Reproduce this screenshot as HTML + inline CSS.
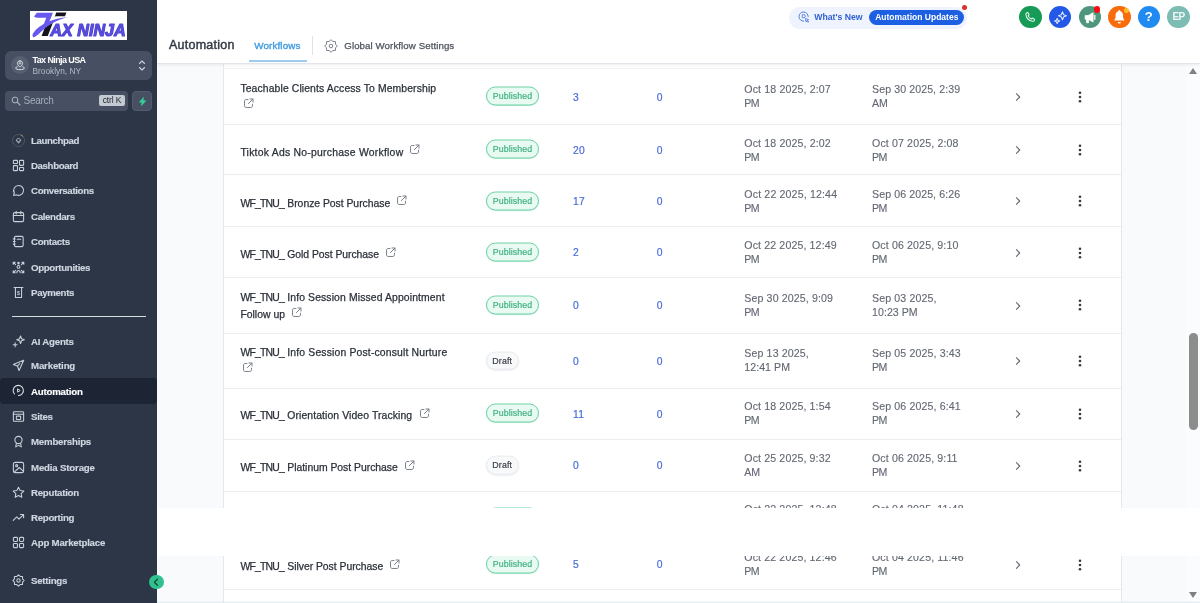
<!DOCTYPE html>
<html lang="en"><head><meta charset="utf-8"><title>Automation - Workflows</title>
<style>
*{box-sizing:border-box;margin:0;padding:0}
html,body{width:1200px;height:603px;overflow:hidden;background:#f9fafc;font-family:"Liberation Sans",Arial,sans-serif;-webkit-font-smoothing:antialiased}
#app{will-change:transform;position:relative;width:1200px;height:603px;overflow:hidden}
/* sidebar */
#sb{position:absolute;left:0;top:0;width:157px;height:603px;background:#2c3647}
#logo{position:absolute;left:30px;top:11.200px;width:97px;height:28.500px;background:#fff;overflow:hidden}
#acct{position:absolute;left:5px;top:51px;width:147px;height:29px;border-radius:6px;background:#465062}
#acct .av{position:absolute;left:6px;top:5px;width:18px;height:18px;border-radius:50%;background:#566072}
#acct .t1{position:absolute;left:27.500px;top:4px;font-size:9px;font-weight:bold;color:#fff;white-space:pre;line-height:11px}
#acct .t2{position:absolute;left:27.500px;top:15px;font-size:8.300px;color:#b4bcc8;white-space:nowrap;line-height:11px}
#srch{position:absolute;left:5px;top:91px;width:123px;height:20px;border-radius:4px;background:#465062}
#srch .ph{position:absolute;left:18.500px;top:4px;font-size:10px;line-height:12px;color:#a3acb9;letter-spacing:-.25px}
#srch .kb{position:absolute;left:94px;top:4px;width:26px;height:11px;border-radius:2px;background:#c5cad2;color:#1c2430;font-size:8.500px;line-height:11px;text-align:center;letter-spacing:-.15px}
#bolt{position:absolute;left:132px;top:91px;width:20px;height:20px;border-radius:4px;background:#465062;border:1px solid #525c6d}
.ni{position:absolute;left:0;width:157px;height:25px;margin-top:-12.500px}
.ni.act{background:#1d2434;border-radius:4px;height:26px;margin-top:-13.200px}
.ni.act .ic{top:6.500px}
.ni.act .tx{top:7.500px}
.ni .ic{position:absolute;left:11.500px;top:6px;width:13px;height:13px}
.ni .ic svg{width:13px;height:13px;display:block}
.ni .tx{position:absolute;left:31px;top:6px;font-size:9.700px;line-height:13px;font-weight:bold;color:#cfd6e0;white-space:pre;-webkit-text-stroke:.15px #cfd6e0}
.ni.act .tx{color:#fff;-webkit-text-stroke:.15px #fff}
#sbdiv{position:absolute;left:12px;top:316px;width:134px;height:1px;background:#d7dce3}
#coll{position:absolute;left:149px;top:574.500px;width:14.500px;height:14.500px;border-radius:50%;background:#2fc08e}
/* top bar */
#tb{position:absolute;left:157px;top:0;width:1043px;height:64px;background:#fff;border-bottom:1px solid #e1e5ea;box-shadow:0 1px 3px rgba(20,30,50,.08)}
#ttl{position:absolute;left:12px;top:37px;font-size:12.500px;line-height:16px;color:#333a45;white-space:pre;-webkit-text-stroke:.45px #333a45}
#tab1{position:absolute;left:97.300px;top:39px;font-size:9.800px;line-height:13px;color:#3f9ae0;white-space:pre;-webkit-text-stroke:.35px #3f9ae0}
#tabul{position:absolute;left:92px;top:60px;width:58px;height:2px;background:#9ccbee}
#tsep{position:absolute;left:154.800px;top:36px;width:1px;height:19px;background:#dfe3e8}
#tab2{position:absolute;left:187.300px;top:39px;font-size:9.700px;line-height:13px;color:#4d535d;white-space:pre;-webkit-text-stroke:.25px #4d535d}
#gear{position:absolute;left:166.750px;top:39px;width:14px;height:14px}
#wn{position:absolute;left:631.500px;top:6.500px;width:178.500px;height:22px;border-radius:11px;background:#eff3fd}
#wn .t{position:absolute;left:25.800px;top:4px;font-size:8.700px;line-height:12px;font-weight:bold;color:#2f5fd3;white-space:pre}
#wn .p{position:absolute;left:80.500px;top:3px;width:94.500px;height:15px;border-radius:8px;background:#1d5fe3}
#wn .p>span{position:absolute;left:6.200px;top:1.300px;font-size:8.500px;line-height:12px;font-weight:bold;color:#fff;white-space:pre}
#wn .dot{position:absolute;left:173.500px;top:-1.400px;width:5.300px;height:5.300px;border-radius:50%;background:#d8302a}
.cb{position:absolute;top:5.700px;width:22.600px;height:22.600px;border-radius:50%}
.cb svg{position:absolute;left:0;top:0;width:22.600px;height:22.600px}
/* content */
#tblbg{position:absolute;left:222.500px;top:64px;width:899px;height:539px;background:#fff;border-left:1px solid #e6e8eb;border-right:1px solid #e6e8eb}
.hl{position:absolute;left:223px;width:898px;height:1px;background:#eaecef}
.cell{position:absolute;transform:translateY(-50%);white-space:nowrap}
.nl{position:absolute;left:240.400px;font-size:10.400px;line-height:15px;height:15px;color:#2b303a;white-space:pre;-webkit-text-stroke:.25px #2b303a}
.ext{position:absolute;width:11px;height:11px}
.pre{display:inline-block;width:46.900px;white-space:pre;overflow:hidden;vertical-align:top;height:15px}
.dt{position:absolute;font-size:10.600px;line-height:14px;height:14px;color:#626873;white-space:pre;-webkit-text-stroke:.12px #626873}
.st{left:486px}
.badge{display:block;height:19px;border-radius:10px;font-size:8.800px;line-height:17.600px;text-align:center;white-space:pre}
.badge.pub{width:53px;border:1px solid #70d3a8;background:#e8faf1;color:#41b283;-webkit-text-stroke:.2px #41b283;box-shadow:0 .5px 1px rgba(50,180,120,.3)}
.badge.dr{width:32.500px;height:18.700px;line-height:16.800px;border:1px solid #e9ebee;background:#f8f9fa;color:#3b3f48;-webkit-text-stroke:.2px #3b3f48;box-shadow:0 1px 1.500px rgba(100,110,120,.12)}
.n1{left:573px;font-size:10.300px;color:#4a6cd8;-webkit-text-stroke:.2px #4a6cd8;letter-spacing:.3px}
.n2{left:656.800px;font-size:10.300px;color:#4a6cd8;-webkit-text-stroke:.2px #4a6cd8;letter-spacing:.3px}
.chv{position:absolute;left:1013.900px}
.kb3{position:absolute;left:1078px;fill:#353a43}
.chev svg{display:block}
.keb{left:1079px;width:3px}
.keb i{display:block;width:2.800px;height:2.800px;border-radius:50%;background:#343942;margin:1.200px 0}
#band{position:absolute;left:157px;top:508px;width:1043px;height:48px;background:#fff}
#sbar{position:absolute;left:1186px;top:64px;width:14px;height:539px;background:#fbfcfd}
#botg{position:absolute;left:157px;top:600.500px;width:1043px;height:2.500px;background:linear-gradient(rgba(225,236,242,0),rgba(222,234,241,1))}
#thumb{position:absolute;left:1189px;top:333px;width:9px;height:97px;border-radius:4.500px;background:#8c8c8c}
.arr{position:absolute;left:1188.800px;width:0;height:0;border-left:4.500px solid transparent;border-right:4.500px solid transparent}
</style></head><body><div id="app">
<div id="tblbg"></div>
<div class="hl" style="top:68px;background:#f1f2f4"></div><div class="hl" style="top:124px"></div><div class="hl" style="top:174px"></div><div class="hl" style="top:226px"></div><div class="hl" style="top:277px"></div><div class="hl" style="top:333px"></div><div class="hl" style="top:388px"></div><div class="hl" style="top:439px"></div><div class="hl" style="top:490.5px"></div><div class="hl" style="top:542px"></div><div class="hl" style="top:589px"></div>
<div class="nl" style="top:81px"><span style="letter-spacing:0.112px">Teachable Clients Access To Membership</span></div><svg class="ext" style="left:242.6px;top:97.8px" viewBox="0 0 10 10"><path d="M8.600 5.600v1.600c0 .8-.6 1.400-1.400 1.400H2.800c-.8 0-1.400-.6-1.400-1.400V2.800c0-.8.600-1.400 1.400-1.400h1.700M6.300 .9h2.800v2.800M9 1L4.900 5.100" fill="none" stroke="#787e88" stroke-width=".9" stroke-linecap="round" stroke-linejoin="round"/></svg>
<div class="cell st" style="top:96.2px"><span class="badge pub"><span style="letter-spacing:0.095px">Published</span></span></div>
<div class="cell n1" style="top:96.5px">3</div>
<div class="cell n2" style="top:96.5px">0</div>
<div class="dt" style="left:744.3px;top:82px"><span style="letter-spacing:0.139px">Oct 18 2025, 2:07</span></div><div class="dt" style="left:744.3px;top:96px"><span style="letter-spacing:-0.645px">PM</span></div><div class="dt" style="left:872px;top:82px"><span style="letter-spacing:0.094px">Sep 30 2025, 2:39</span></div><div class="dt" style="left:872px;top:96px"><span style="letter-spacing:-0.145px">AM</span></div>
<svg class="chv" style="top:91.8px" viewBox="0 0 8 10" width="8" height="10"><path d="M2.400 1.700l3.300 3.300-3.300 3.300" fill="none" stroke="#666b74" stroke-width="1.100" stroke-linecap="round" stroke-linejoin="round"/></svg>
<svg class="kb3" style="top:90.7px" viewBox="0 0 4 12" width="4" height="12"><circle cx="2" cy="1.800" r="1.300"/><circle cx="2" cy="6" r="1.300"/><circle cx="2" cy="10.200" r="1.300"/></svg>
<div class="nl" style="top:145px"><span style="letter-spacing:0.247px">Tiktok Ads No-purchase Workflow</span></div><svg class="ext" style="left:409.4px;top:144.2px" viewBox="0 0 10 10"><path d="M8.600 5.600v1.600c0 .8-.6 1.400-1.400 1.400H2.800c-.8 0-1.400-.6-1.400-1.400V2.800c0-.8.600-1.400 1.400-1.400h1.700M6.300 .9h2.800v2.800M9 1L4.900 5.100" fill="none" stroke="#787e88" stroke-width=".9" stroke-linecap="round" stroke-linejoin="round"/></svg>
<div class="cell st" style="top:149.3px"><span class="badge pub"><span style="letter-spacing:0.095px">Published</span></span></div>
<div class="cell n1" style="top:149.60000000000002px">20</div>
<div class="cell n2" style="top:149.60000000000002px">0</div>
<div class="dt" style="left:744.3px;top:136px"><span style="letter-spacing:0.139px">Oct 18 2025, 2:02</span></div><div class="dt" style="left:744.3px;top:150px"><span style="letter-spacing:-0.645px">PM</span></div><div class="dt" style="left:872px;top:136px"><span style="letter-spacing:0.139px">Oct 07 2025, 2:08</span></div><div class="dt" style="left:872px;top:150px"><span style="letter-spacing:-0.645px">PM</span></div>
<svg class="chv" style="top:144.9px" viewBox="0 0 8 10" width="8" height="10"><path d="M2.400 1.700l3.300 3.300-3.300 3.300" fill="none" stroke="#666b74" stroke-width="1.100" stroke-linecap="round" stroke-linejoin="round"/></svg>
<svg class="kb3" style="top:143.8px" viewBox="0 0 4 12" width="4" height="12"><circle cx="2" cy="1.800" r="1.300"/><circle cx="2" cy="6" r="1.300"/><circle cx="2" cy="10.200" r="1.300"/></svg>
<div class="nl" style="top:196px"><span class="pre"><span style="letter-spacing:-0.783px">WF_TNU_</span> </span><span style="letter-spacing:-0.025px">Bronze Post Purchase</span></div><svg class="ext" style="left:396.3px;top:195.3px" viewBox="0 0 10 10"><path d="M8.600 5.600v1.600c0 .8-.6 1.400-1.400 1.400H2.800c-.8 0-1.400-.6-1.400-1.400V2.800c0-.8.600-1.400 1.400-1.400h1.700M6.300 .9h2.800v2.800M9 1L4.900 5.100" fill="none" stroke="#787e88" stroke-width=".9" stroke-linecap="round" stroke-linejoin="round"/></svg>
<div class="cell st" style="top:200.8px"><span class="badge pub"><span style="letter-spacing:0.095px">Published</span></span></div>
<div class="cell n1" style="top:201.10000000000002px">17</div>
<div class="cell n2" style="top:201.10000000000002px">0</div>
<div class="dt" style="left:744.3px;top:187px"><span style="letter-spacing:0.154px">Oct 22 2025, 12:44</span></div><div class="dt" style="left:744.3px;top:201px"><span style="letter-spacing:-0.645px">PM</span></div><div class="dt" style="left:872px;top:187px"><span style="letter-spacing:0.094px">Sep 06 2025, 6:26</span></div><div class="dt" style="left:872px;top:201px"><span style="letter-spacing:-0.645px">PM</span></div>
<svg class="chv" style="top:196.4px" viewBox="0 0 8 10" width="8" height="10"><path d="M2.400 1.700l3.300 3.300-3.300 3.300" fill="none" stroke="#666b74" stroke-width="1.100" stroke-linecap="round" stroke-linejoin="round"/></svg>
<svg class="kb3" style="top:195.3px" viewBox="0 0 4 12" width="4" height="12"><circle cx="2" cy="1.800" r="1.300"/><circle cx="2" cy="6" r="1.300"/><circle cx="2" cy="10.200" r="1.300"/></svg>
<div class="nl" style="top:247px"><span class="pre"><span style="letter-spacing:-0.783px">WF_TNU_</span> </span><span style="letter-spacing:-0.04px">Gold Post Purchase</span></div><svg class="ext" style="left:385.1px;top:247.0px" viewBox="0 0 10 10"><path d="M8.600 5.600v1.600c0 .8-.6 1.400-1.400 1.400H2.800c-.8 0-1.400-.6-1.400-1.400V2.800c0-.8.600-1.400 1.400-1.400h1.700M6.300 .9h2.800v2.800M9 1L4.900 5.100" fill="none" stroke="#787e88" stroke-width=".9" stroke-linecap="round" stroke-linejoin="round"/></svg>
<div class="cell st" style="top:252.1px"><span class="badge pub"><span style="letter-spacing:0.095px">Published</span></span></div>
<div class="cell n1" style="top:252.4px">2</div>
<div class="cell n2" style="top:252.4px">0</div>
<div class="dt" style="left:744.3px;top:238px"><span style="letter-spacing:.13px">Oct 22 2025, 12:49</span></div><div class="dt" style="left:744.3px;top:252px"><span style="letter-spacing:-0.645px">PM</span></div><div class="dt" style="left:872px;top:238px"><span style="letter-spacing:.13px">Oct 06 2025, 9:10</span></div><div class="dt" style="left:872px;top:252px"><span style="letter-spacing:-0.645px">PM</span></div>
<svg class="chv" style="top:247.7px" viewBox="0 0 8 10" width="8" height="10"><path d="M2.400 1.700l3.300 3.300-3.300 3.300" fill="none" stroke="#666b74" stroke-width="1.100" stroke-linecap="round" stroke-linejoin="round"/></svg>
<svg class="kb3" style="top:246.6px" viewBox="0 0 4 12" width="4" height="12"><circle cx="2" cy="1.800" r="1.300"/><circle cx="2" cy="6" r="1.300"/><circle cx="2" cy="10.200" r="1.300"/></svg>
<div class="nl" style="top:290px"><span class="pre"><span style="letter-spacing:-0.783px">WF_TNU_</span> </span><span style="letter-spacing:0.121px">Info Session Missed Appointment</span></div><div class="nl" style="top:307px"><span style="letter-spacing:0.013px">Follow up</span></div><svg class="ext" style="left:290.6px;top:306.8px" viewBox="0 0 10 10"><path d="M8.600 5.600v1.600c0 .8-.6 1.400-1.400 1.400H2.800c-.8 0-1.400-.6-1.400-1.400V2.800c0-.8.600-1.400 1.400-1.400h1.700M6.300 .9h2.800v2.800M9 1L4.900 5.100" fill="none" stroke="#787e88" stroke-width=".9" stroke-linecap="round" stroke-linejoin="round"/></svg>
<div class="cell st" style="top:304.9px"><span class="badge pub"><span style="letter-spacing:0.095px">Published</span></span></div>
<div class="cell n1" style="top:305.2px">0</div>
<div class="cell n2" style="top:305.2px">0</div>
<div class="dt" style="left:744.3px;top:291px"><span style="letter-spacing:.13px">Sep 30 2025, 9:09</span></div><div class="dt" style="left:744.3px;top:305px"><span style="letter-spacing:-0.645px">PM</span></div><div class="dt" style="left:872px;top:291px"><span style="letter-spacing:.13px">Sep 03 2025,</span></div><div class="dt" style="left:872px;top:305px"><span style="letter-spacing:.05px">10:23 PM</span></div>
<svg class="chv" style="top:300.5px" viewBox="0 0 8 10" width="8" height="10"><path d="M2.400 1.700l3.300 3.300-3.300 3.300" fill="none" stroke="#666b74" stroke-width="1.100" stroke-linecap="round" stroke-linejoin="round"/></svg>
<svg class="kb3" style="top:299.4px" viewBox="0 0 4 12" width="4" height="12"><circle cx="2" cy="1.800" r="1.300"/><circle cx="2" cy="6" r="1.300"/><circle cx="2" cy="10.200" r="1.300"/></svg>
<div class="nl" style="top:345px"><span class="pre"><span style="letter-spacing:-0.783px">WF_TNU_</span> </span><span style="letter-spacing:0.161px">Info Session Post-consult Nurture</span></div><svg class="ext" style="left:242.4px;top:362.0px" viewBox="0 0 10 10"><path d="M8.600 5.600v1.600c0 .8-.6 1.400-1.400 1.400H2.800c-.8 0-1.400-.6-1.400-1.400V2.800c0-.8.600-1.400 1.400-1.400h1.700M6.300 .9h2.800v2.800M9 1L4.900 5.100" fill="none" stroke="#787e88" stroke-width=".9" stroke-linecap="round" stroke-linejoin="round"/></svg>
<div class="cell st" style="top:360.6px"><span class="badge dr"><span style="letter-spacing:0.164px">Draft</span></span></div>
<div class="cell n1" style="top:360.90000000000003px">0</div>
<div class="cell n2" style="top:360.90000000000003px">0</div>
<div class="dt" style="left:744.3px;top:346px"><span style="letter-spacing:.13px">Sep 13 2025,</span></div><div class="dt" style="left:744.3px;top:360px"><span style="letter-spacing:.05px">12:41 PM</span></div><div class="dt" style="left:872px;top:346px"><span style="letter-spacing:.13px">Sep 05 2025, 3:43</span></div><div class="dt" style="left:872px;top:360px"><span style="letter-spacing:-0.645px">PM</span></div>
<svg class="chv" style="top:356.2px" viewBox="0 0 8 10" width="8" height="10"><path d="M2.400 1.700l3.300 3.300-3.300 3.300" fill="none" stroke="#666b74" stroke-width="1.100" stroke-linecap="round" stroke-linejoin="round"/></svg>
<svg class="kb3" style="top:355.1px" viewBox="0 0 4 12" width="4" height="12"><circle cx="2" cy="1.800" r="1.300"/><circle cx="2" cy="6" r="1.300"/><circle cx="2" cy="10.200" r="1.300"/></svg>
<div class="nl" style="top:408px"><span class="pre"><span style="letter-spacing:-0.783px">WF_TNU_</span> </span><span style="letter-spacing:0.101px">Orientation Video Tracking</span></div><svg class="ext" style="left:418.5px;top:407.9px" viewBox="0 0 10 10"><path d="M8.600 5.600v1.600c0 .8-.6 1.400-1.400 1.400H2.800c-.8 0-1.400-.6-1.400-1.400V2.800c0-.8.600-1.400 1.400-1.400h1.700M6.300 .9h2.800v2.800M9 1L4.900 5.100" fill="none" stroke="#787e88" stroke-width=".9" stroke-linecap="round" stroke-linejoin="round"/></svg>
<div class="cell st" style="top:413.4px"><span class="badge pub"><span style="letter-spacing:0.095px">Published</span></span></div>
<div class="cell n1" style="top:413.7px">11</div>
<div class="cell n2" style="top:413.7px">0</div>
<div class="dt" style="left:744.3px;top:399px"><span style="letter-spacing:.13px">Oct 18 2025, 1:54</span></div><div class="dt" style="left:744.3px;top:413px"><span style="letter-spacing:-0.645px">PM</span></div><div class="dt" style="left:872px;top:399px"><span style="letter-spacing:.13px">Sep 06 2025, 6:41</span></div><div class="dt" style="left:872px;top:413px"><span style="letter-spacing:-0.645px">PM</span></div>
<svg class="chv" style="top:409.0px" viewBox="0 0 8 10" width="8" height="10"><path d="M2.400 1.700l3.300 3.300-3.300 3.300" fill="none" stroke="#666b74" stroke-width="1.100" stroke-linecap="round" stroke-linejoin="round"/></svg>
<svg class="kb3" style="top:407.9px" viewBox="0 0 4 12" width="4" height="12"><circle cx="2" cy="1.800" r="1.300"/><circle cx="2" cy="6" r="1.300"/><circle cx="2" cy="10.200" r="1.300"/></svg>
<div class="nl" style="top:460px"><span class="pre"><span style="letter-spacing:-0.783px">WF_TNU_</span> </span><span style="letter-spacing:-0.018px">Platinum Post Purchase</span></div><svg class="ext" style="left:403.7px;top:459.5px" viewBox="0 0 10 10"><path d="M8.600 5.600v1.600c0 .8-.6 1.400-1.400 1.400H2.800c-.8 0-1.400-.6-1.400-1.400V2.800c0-.8.600-1.400 1.400-1.400h1.700M6.300 .9h2.800v2.800M9 1L4.900 5.100" fill="none" stroke="#787e88" stroke-width=".9" stroke-linecap="round" stroke-linejoin="round"/></svg>
<div class="cell st" style="top:465px"><span class="badge dr"><span style="letter-spacing:0.164px">Draft</span></span></div>
<div class="cell n1" style="top:465.3px">0</div>
<div class="cell n2" style="top:465.3px">0</div>
<div class="dt" style="left:744.3px;top:451px"><span style="letter-spacing:.13px">Oct 25 2025, 9:32</span></div><div class="dt" style="left:744.3px;top:465px"><span style="letter-spacing:-0.145px">AM</span></div><div class="dt" style="left:872px;top:451px"><span style="letter-spacing:.13px">Oct 06 2025, 9:11</span></div><div class="dt" style="left:872px;top:465px"><span style="letter-spacing:-0.645px">PM</span></div>
<svg class="chv" style="top:460.6px" viewBox="0 0 8 10" width="8" height="10"><path d="M2.400 1.700l3.300 3.300-3.300 3.300" fill="none" stroke="#666b74" stroke-width="1.100" stroke-linecap="round" stroke-linejoin="round"/></svg>
<svg class="kb3" style="top:459.5px" viewBox="0 0 4 12" width="4" height="12"><circle cx="2" cy="1.800" r="1.300"/><circle cx="2" cy="6" r="1.300"/><circle cx="2" cy="10.200" r="1.300"/></svg>
<div class="nl" style="top:511px"><span class="pre"><span style="letter-spacing:-0.783px">WF_TNU_</span> </span><span style="letter-spacing:0.122px">Referral Post Purchase</span></div><svg class="ext" style="left:403.5px;top:511.0px" viewBox="0 0 10 10"><path d="M8.600 5.600v1.600c0 .8-.6 1.400-1.400 1.400H2.800c-.8 0-1.400-.6-1.400-1.400V2.800c0-.8.600-1.400 1.400-1.400h1.700M6.300 .9h2.800v2.800M9 1L4.900 5.100" fill="none" stroke="#787e88" stroke-width=".9" stroke-linecap="round" stroke-linejoin="round"/></svg>
<div class="cell st" style="top:516.5px"><span class="badge pub"><span style="letter-spacing:0.095px">Published</span></span></div>
<div class="cell n1" style="top:516.8px">1</div>
<div class="cell n2" style="top:516.8px">0</div>
<div class="dt" style="left:744.3px;top:502px"><span style="letter-spacing:.13px">Oct 22 2025, 12:48</span></div><div class="dt" style="left:744.3px;top:516px"><span style="letter-spacing:-0.645px">PM</span></div><div class="dt" style="left:872px;top:502px"><span style="letter-spacing:.13px">Oct 04 2025, 11:48</span></div><div class="dt" style="left:872px;top:516px"><span style="letter-spacing:-0.645px">PM</span></div>
<svg class="chv" style="top:512.1px" viewBox="0 0 8 10" width="8" height="10"><path d="M2.400 1.700l3.300 3.300-3.300 3.300" fill="none" stroke="#666b74" stroke-width="1.100" stroke-linecap="round" stroke-linejoin="round"/></svg>
<svg class="kb3" style="top:511.0px" viewBox="0 0 4 12" width="4" height="12"><circle cx="2" cy="1.800" r="1.300"/><circle cx="2" cy="6" r="1.300"/><circle cx="2" cy="10.200" r="1.300"/></svg>
<div class="nl" style="top:559px"><span class="pre"><span style="letter-spacing:-0.783px">WF_TNU_</span> </span><span style="letter-spacing:-0.028px">Silver Post Purchase</span></div><svg class="ext" style="left:389.3px;top:558.5px" viewBox="0 0 10 10"><path d="M8.600 5.600v1.600c0 .8-.6 1.400-1.400 1.400H2.800c-.8 0-1.400-.6-1.400-1.400V2.800c0-.8.600-1.400 1.400-1.400h1.700M6.300 .9h2.800v2.800M9 1L4.900 5.100" fill="none" stroke="#787e88" stroke-width=".9" stroke-linecap="round" stroke-linejoin="round"/></svg>
<div class="cell st" style="top:564px"><span class="badge pub"><span style="letter-spacing:0.095px">Published</span></span></div>
<div class="cell n1" style="top:564.3px">5</div>
<div class="cell n2" style="top:564.3px">0</div>
<div class="dt" style="left:744.3px;top:550px"><span style="letter-spacing:.13px">Oct 22 2025, 12:46</span></div><div class="dt" style="left:744.3px;top:564px"><span style="letter-spacing:-0.645px">PM</span></div><div class="dt" style="left:872px;top:550px"><span style="letter-spacing:.13px">Oct 04 2025, 11:46</span></div><div class="dt" style="left:872px;top:564px"><span style="letter-spacing:-0.645px">PM</span></div>
<svg class="chv" style="top:559.6px" viewBox="0 0 8 10" width="8" height="10"><path d="M2.400 1.700l3.300 3.300-3.300 3.300" fill="none" stroke="#666b74" stroke-width="1.100" stroke-linecap="round" stroke-linejoin="round"/></svg>
<svg class="kb3" style="top:558.5px" viewBox="0 0 4 12" width="4" height="12"><circle cx="2" cy="1.800" r="1.300"/><circle cx="2" cy="6" r="1.300"/><circle cx="2" cy="10.200" r="1.300"/></svg>

<div id="sbar"></div><div id="thumb"></div>
<div class="arr" style="top:67.700px;border-bottom:6px solid #808080"></div>
<div class="arr" style="top:591.800px;border-top:6px solid #808080"></div>
<div id="band"></div><div id="botg"></div>
<div id="tb">
<div id="ttl"><span style="letter-spacing:0.237px">Automation</span></div>
<div id="tab1"><span style="letter-spacing:0.133px">Workflows</span></div><div id="tabul"></div><div id="tsep"></div>
<svg id="gear" viewBox="0 0 14 14"><circle cx="7" cy="7" r="1.800" fill="none" stroke="#7d828b" stroke-width="1"/><path d="M7.00 0.70L8.88 2.47L11.45 2.55L11.53 5.12L13.30 7.00L11.53 8.88L11.45 11.45L8.88 11.53L7.00 13.30L5.12 11.53L2.55 11.45L2.47 8.88L0.70 7.00L2.47 5.12L2.55 2.55L5.12 2.47z" fill="none" stroke="#7d828b" stroke-width="1" stroke-linejoin="round"/></svg>
<div id="tab2"><span style="letter-spacing:0.081px">Global Workflow Settings</span></div>
<div id="wn"><svg style="position:absolute;left:9px;top:4px" width="12" height="13" viewBox="0 0 12 13"><path d="M10.200 5.600A4.600 4.600 0 1 0 5.600 10.200" fill="none" stroke="#4f7be0" stroke-width="1" stroke-linecap="round"/><path d="M4.300 3.700h1.500a1.500 1.500 0 0 1 0 3.100H4.300zM7.600 7.600l3 1-1.200.6 1.200 1.500-.7.600-1.200-1.500-.7 1z" fill="none" stroke="#4f7be0" stroke-width=".9" stroke-linejoin="round"/></svg>
<div class="t"><span style="letter-spacing:-0.011px">What's New</span></div><div class="p"><span><span style="letter-spacing:0.004px">Automation Updates</span></span></div><div class="dot"></div></div>
<div class="cb" style="left:862px;background:#169a56"><svg viewBox="0 0 24 24"><path d="M9.500 7l1.200 2.400-1 1.100c.7 1.500 1.800 2.600 3.300 3.300l1.100-1 2.400 1.200c.2 1.600-.9 2.400-2.300 2.200-3.400-.6-6.200-3.400-6.800-6.800-.2-1.400.6-2.500 2.100-2.400z" fill="none" stroke="#dff5e8" stroke-width="1.150" stroke-linejoin="round"/></svg></div>
<div class="cb" style="left:891.700px;background:#2458e6"><svg viewBox="0 0 24 24"><path d="M14.300 6.200l1.200 3 3 1.200-3 1.200-1.200 3-1.200-3-3-1.200 3-1.200zM8.700 13.200l.8 1.900 1.900.8-1.900.8-.8 1.900-.8-1.900-1.900-.8 1.900-.8z" fill="none" stroke="#dfe8ff" stroke-width="1.200" stroke-linejoin="round"/></svg></div>
<div class="cb" style="left:921.500px;background:#4f977c"><svg viewBox="0 0 24 24"><path d="M6.500 10.200h3.200l5.300-3v9.800l-5.300-3H6.500zM8 14v3.800h2.200V14" fill="#fff" stroke="#fff" stroke-width=".8" stroke-linejoin="round"/><path d="M16.800 10v4.200" stroke="#fff" stroke-width="1.300" stroke-linecap="round"/></svg></div>
<div style="position:absolute;left:936.700px;top:5.800px;width:6.800px;height:6.800px;border-radius:50%;background:#fa0a14"></div>
<div class="cb" style="left:951.200px;background:#f86c0c"><svg viewBox="0 0 24 24"><path d="M12 4.200c.6 0 1 .4 1 1v.3c1.900.5 3 2.200 3 4.300v2.800l1.500 2.700H6.500L8 12.600V9.800c0-2.100 1.100-3.800 3-4.300v-.3c0-.6.400-1 1-1z" fill="#fff"/><path d="M10.300 16.900h3.400a1.700 1.700 0 0 1-3.400 0z" fill="#fff"/></svg></div>
<div style="position:absolute;left:966.500px;top:7.500px;width:5px;height:5px;border-radius:50%;background:#fbbf24"></div>
<div class="cb" style="left:980.500px;background:#1f8bf0"><div style="position:absolute;left:0;top:3.500px;width:22.600px;text-align:center;font-size:13px;line-height:16px;font-weight:bold;color:#fff">?</div></div>
<div class="cb" style="left:1010px;background:#7dbcb2"><div style="position:absolute;left:.3px;top:4.500px;width:22.600px;text-align:center;font-size:10px;line-height:13px;font-weight:bold;color:#eef7f5;letter-spacing:-.55px">EP</div></div>
</div>
<div id="sb">
<div id="logo"><svg width="97" height="28.500" viewBox="0 0 97 28.500" role="img" aria-label="TAX NINJA"><text transform="translate(1.600 24.800) skewX(-21) scale(1.340 1.065)" x="0" y="0" font-family="Liberation Sans,Arial,sans-serif" font-size="32.200" font-weight="bold" fill="#15131c">T</text><path d="M22.900 0.800L26.400 0.800 24.700 6.300 27 7.200 24 11.300 13.500 16.800 12.300 17 16.300 6.800 3 6.900 3 0.800z" fill="#fff"/><path d="M6.900 1.700H22.900L18.200 13.600 12.300 17 16.300 6.800H7.800C6.300 6.800 5 6.400 4 5.600z" fill="#6658ee"/><path d="M37.600 6.300C27 8.800 17 14.500 9.500 22.300c-1.700 1.700-3.500 3.200-5.900 4.100-1.300-.9-1.500-2.500-.5-4.100C9 13.300 24 6.900 37.600 6.300z" fill="#6658ee"/><text x="20.300" y="25" font-family="Liberation Sans,Arial,sans-serif" font-size="17.300" font-weight="bold" font-style="italic" fill="#5b4fe3" stroke="#5146d2" stroke-width="1.200" stroke-linejoin="round" textLength="75.500" lengthAdjust="spacingAndGlyphs">AX NINJA</text></svg></div>
<div id="acct"><div class="av"><svg width="18" height="18" viewBox="0 0 18 18"><path d="M9 4.800a2.600 2.600 0 0 1 2.600 2.600c0 1.700-2.600 3.800-2.600 3.800S6.400 9.100 6.400 7.400A2.600 2.600 0 0 1 9 4.800zM6.200 10.800c-1 .3-1.600.8-1.600 1.300 0 .9 2 1.500 4.400 1.500s4.400-.6 4.400-1.500c0-.5-.6-1-1.600-1.300" fill="none" stroke="#e6eaf0" stroke-width=".9" stroke-linecap="round"/><circle cx="9" cy="7.400" r=".8" fill="none" stroke="#e6eaf0" stroke-width=".8"/></svg></div>
<div class="t1"><span style="letter-spacing:-0.605px">Tax Ninja USA</span></div><div class="t2">Brooklyn, NY</div>
<svg style="position:absolute;left:133px;top:8px" width="8" height="13" viewBox="0 0 8 13"><path d="M1.500 4.500L4 2l2.500 2.500M1.500 8.500L4 11l2.500-2.500" fill="none" stroke="#c9d0da" stroke-width="1.100" stroke-linecap="round" stroke-linejoin="round"/></svg></div>
<div id="srch"><svg style="position:absolute;left:5.500px;top:5px" width="10" height="10" viewBox="0 0 10 10"><circle cx="4" cy="4" r="2.900" fill="none" stroke="#aeb6c2" stroke-width="1"/><path d="M6.200 6.200L9 9" stroke="#aeb6c2" stroke-width="1.100" stroke-linecap="round"/></svg><div class="ph">Search</div><div class="kb">ctrl K</div></div>
<div id="bolt"><svg style="position:absolute;left:5.500px;top:4.500px" width="7.200" height="9" viewBox="0 0 8 10"><path d="M5 .6L.5 5.700h2.900L2.900 9.500l4.600-5.300H4.500z" fill="#35d29a" stroke="#35d29a" stroke-width=".7" stroke-linejoin="round"/></svg></div>
<div class="ni" style="top:140.3px"><span class="ic"><svg viewBox="0 0 14 14"><circle cx="7" cy="7" r="6.500" fill="none" stroke="#505b6d" stroke-width="1"/><path d="M9.400 .95a6.500 6.500 0 0 1 2.600 1.900" fill="none" stroke="#c99a4b" stroke-width="1"/><path d="M4.600 7.600c0-1.700 1-2.800 2.400-2.800s2.400 1.100 2.400 2.800H7.600v2H6.400v-2z" fill="none" stroke="#bcc4cf" stroke-width=".9"/></svg></span><span class="tx"><span style="letter-spacing:-0.419px">Launchpad</span></span></div><div class="ni" style="top:165px"><span class="ic"><svg viewBox="0 0 14 14"><rect x="1.500" y="1.500" width="4.400" height="3.400" rx=".6" fill="none" stroke="#c9d0da" stroke-width="1.150" stroke-linecap="round" stroke-linejoin="round"/><rect x="8.100" y="1.500" width="4.400" height="5.400" rx=".6" fill="none" stroke="#c9d0da" stroke-width="1.150" stroke-linecap="round" stroke-linejoin="round"/><rect x="1.500" y="7.100" width="4.400" height="5.400" rx=".6" fill="none" stroke="#c9d0da" stroke-width="1.150" stroke-linecap="round" stroke-linejoin="round"/><rect x="8.100" y="9.100" width="4.400" height="3.400" rx=".6" fill="none" stroke="#c9d0da" stroke-width="1.150" stroke-linecap="round" stroke-linejoin="round"/></svg></span><span class="tx"><span style="letter-spacing:-0.39px">Dashboard</span></span></div><div class="ni" style="top:190.5px"><span class="ic"><svg viewBox="0 0 14 14"><path d="M7.200 1.600a5.300 5.300 0 1 1-2.700 9.900L1.700 12.300l.8-2.700A5.300 5.300 0 0 1 7.200 1.600z" fill="none" stroke="#c9d0da" stroke-width="1.150" stroke-linecap="round" stroke-linejoin="round"/></svg></span><span class="tx"><span style="letter-spacing:-0.346px">Conversations</span></span></div><div class="ni" style="top:216px"><span class="ic"><svg viewBox="0 0 14 14"><rect x="1.500" y="2.800" width="11" height="9.700" rx="1.400" fill="none" stroke="#c9d0da" stroke-width="1.150" stroke-linecap="round" stroke-linejoin="round"/><path d="M1.500 6h11M4.500 1.400v2.800M9.500 1.400v2.800" fill="none" stroke="#c9d0da" stroke-width="1.150" stroke-linecap="round" stroke-linejoin="round"/></svg></span><span class="tx"><span style="letter-spacing:-0.338px">Calendars</span></span></div><div class="ni" style="top:241.3px"><span class="ic"><svg viewBox="0 0 14 14"><rect x="2.600" y="1.500" width="9.400" height="11" rx="1.400" fill="none" stroke="#c9d0da" stroke-width="1.150" stroke-linecap="round" stroke-linejoin="round"/><path d="M1.400 4.200h2M1.400 7h2M1.400 9.800h2M5.600 4.600h3.800" fill="none" stroke="#c9d0da" stroke-width="1.150" stroke-linecap="round" stroke-linejoin="round"/></svg></span><span class="tx"><span style="letter-spacing:-0.332px">Contacts</span></span></div><div class="ni" style="top:267px"><span class="ic"><svg viewBox="0 0 14 14"><circle cx="7" cy="6.400" r="1.500" fill="none" stroke="#c9d0da" stroke-width="1.150" stroke-linecap="round" stroke-linejoin="round"/><circle cx="7" cy="2.300" r=".8" fill="none" stroke="#c9d0da" stroke-width="1.150" stroke-linecap="round" stroke-linejoin="round"/><path d="M5.200 12.600c0-1.500.7-2.400 1.800-2.400s1.800.9 1.800 2.400M1.300 3.500V1.300h2.200M1.300 1.300l2.600 2.600M12.700 3.500V1.300h-2.200M12.700 1.300l-2.600 2.600M1.300 10.500v2.200h2.200M1.300 12.700l2.600-2.600M12.700 10.500v2.200h-2.200M12.700 12.700l-2.600-2.600" fill="none" stroke="#c9d0da" stroke-width="1.150" stroke-linecap="round" stroke-linejoin="round"/></svg></span><span class="tx"><span style="letter-spacing:-0.34px">Opportunities</span></span></div><div class="ni" style="top:292px"><span class="ic"><svg viewBox="0 0 14 14"><path d="M2.200 1.600h9.600M3.700 1.600v10.800h6.600V1.600" fill="none" stroke="#c9d0da" stroke-width="1.150" stroke-linecap="round" stroke-linejoin="round"/><text x="7" y="9.400" font-size="5.500" font-weight="bold" fill="#c9d0da" text-anchor="middle" font-family="Liberation Sans,sans-serif">$</text></svg></span><span class="tx"><span style="letter-spacing:-0.323px">Payments</span></span></div><div class="ni" style="top:341px"><span class="ic"><svg viewBox="0 0 14 14"><path d="M9.200 1l1.100 3 3 1.100-3 1.100-1.100 3-1.100-3-3-1.100 3-1.100z" fill="none" stroke="#c9d0da" stroke-width="1.150" stroke-linecap="round" stroke-linejoin="round"/><path d="M3.400 8.400v4.200M1.300 10.500h4.200" fill="none" stroke="#c9d0da" stroke-width="1.150" stroke-linecap="round" stroke-linejoin="round"/></svg></span><span class="tx"><span style="letter-spacing:-0.24px">AI Agents</span></span></div><div class="ni" style="top:365.5px"><span class="ic"><svg viewBox="0 0 14 14"><path d="M12.600 1.400L1.400 5.800l4.400 1.800 1.800 4.800zM5.800 7.600l2.600-2.600" fill="none" stroke="#c9d0da" stroke-width="1.150" stroke-linecap="round" stroke-linejoin="round"/></svg></span><span class="tx"><span style="letter-spacing:-0.185px">Marketing</span></span></div><div class="ni act" style="top:391px"><span class="ic"><svg viewBox="0 0 14 14"><path d="M2.600 10.600A5.500 5.500 0 1 1 7 12.500" fill="none" stroke="#dde2e9" stroke-width="1.100" stroke-linecap="round"/><path d="M6 5.200l2.800 1.800L6 8.800z" fill="none" stroke="#dde2e9" stroke-width="1" stroke-linejoin="round"/></svg></span><span class="tx"><span style="letter-spacing:-0.221px">Automation</span></span></div><div class="ni" style="top:416.3px"><span class="ic"><svg viewBox="0 0 14 14"><rect x="1.500" y="1.800" width="11" height="10.400" rx="1" fill="none" stroke="#c9d0da" stroke-width="1.150" stroke-linecap="round" stroke-linejoin="round"/><path d="M1.500 4.600h11" fill="none" stroke="#c9d0da" stroke-width="1.150" stroke-linecap="round" stroke-linejoin="round"/><rect x="4.700" y="6.600" width="4.600" height="3.600" rx=".6" fill="none" stroke="#c9d0da" stroke-width="1.150" stroke-linecap="round" stroke-linejoin="round"/></svg></span><span class="tx"><span style="letter-spacing:-0.311px">Sites</span></span></div><div class="ni" style="top:441.5px"><span class="ic"><svg viewBox="0 0 14 14"><circle cx="7" cy="5.400" r="3.900" fill="none" stroke="#c9d0da" stroke-width="1.150" stroke-linecap="round" stroke-linejoin="round"/><path d="M4.800 8.600l-.8 4.200 3-1.600 3 1.600-.8-4.200" fill="none" stroke="#c9d0da" stroke-width="1.150" stroke-linecap="round" stroke-linejoin="round"/></svg></span><span class="tx"><span style="letter-spacing:-0.223px">Memberships</span></span></div><div class="ni" style="top:467px"><span class="ic"><svg viewBox="0 0 14 14"><rect x="1.500" y="1.500" width="11" height="11" rx="1.800" fill="none" stroke="#c9d0da" stroke-width="1.150" stroke-linecap="round" stroke-linejoin="round"/><circle cx="5" cy="5" r="1.100" fill="none" stroke="#c9d0da" stroke-width="1.150" stroke-linecap="round" stroke-linejoin="round"/><path d="M2.400 12l5.400-5 4.600 4.200" fill="none" stroke="#c9d0da" stroke-width="1.150" stroke-linecap="round" stroke-linejoin="round"/></svg></span><span class="tx"><span style="letter-spacing:-0.186px">Media Storage</span></span></div><div class="ni" style="top:492px"><span class="ic"><svg viewBox="0 0 14 14"><path d="M7 1.300l1.750 3.600 3.950.550-2.850 2.800.7 3.950L7 10.300l-3.550 1.900.7-3.950L1.300 5.450l3.950-.55z" fill="none" stroke="#c9d0da" stroke-width="1.150" stroke-linecap="round" stroke-linejoin="round"/></svg></span><span class="tx"><span style="letter-spacing:-0.269px">Reputation</span></span></div><div class="ni" style="top:517.5px"><span class="ic"><svg viewBox="0 0 14 14"><path d="M1.300 10.200l3.800-3.800 2.400 2.400 5-5M9 3.800h3.500v3.500" fill="none" stroke="#c9d0da" stroke-width="1.150" stroke-linecap="round" stroke-linejoin="round"/></svg></span><span class="tx"><span style="letter-spacing:-0.283px">Reporting</span></span></div><div class="ni" style="top:542.5px"><span class="ic"><svg viewBox="0 0 14 14"><rect x="1.500" y="1.500" width="4.400" height="4.400" rx="1" fill="none" stroke="#c9d0da" stroke-width="1.150" stroke-linecap="round" stroke-linejoin="round"/><rect x="8.100" y="1.500" width="4.400" height="4.400" rx="1" fill="none" stroke="#c9d0da" stroke-width="1.150" stroke-linecap="round" stroke-linejoin="round"/><rect x="1.500" y="8.100" width="4.400" height="4.400" rx="1" fill="none" stroke="#c9d0da" stroke-width="1.150" stroke-linecap="round" stroke-linejoin="round"/><rect x="8.100" y="8.100" width="4.400" height="4.400" rx="1" fill="none" stroke="#c9d0da" stroke-width="1.150" stroke-linecap="round" stroke-linejoin="round"/></svg></span><span class="tx"><span style="letter-spacing:-0.229px">App Marketplace</span></span></div><div class="ni" style="top:580px"><span class="ic"><svg viewBox="0 0 14 14"><circle cx="7" cy="7" r="1.800" fill="none" stroke="#c9d0da" stroke-width="1.150" stroke-linecap="round" stroke-linejoin="round"/><path d="M7.00 0.90L8.80 2.66L11.31 2.69L11.34 5.20L13.10 7.00L11.34 8.80L11.31 11.31L8.80 11.34L7.00 13.10L5.20 11.34L2.69 11.31L2.66 8.80L0.90 7.00L2.66 5.20L2.69 2.69L5.20 2.66z" fill="none" stroke="#c9d0da" stroke-width="1.150" stroke-linecap="round" stroke-linejoin="round"/></svg></span><span class="tx"><span style="letter-spacing:-0.265px">Settings</span></span></div>
<div id="sbdiv"></div>
</div>
<div id="coll"><svg width="14.500" height="14.500" viewBox="0 0 13 13"><path d="M7.500 3.800L4.900 6.500l2.600 2.700" fill="none" stroke="#1d4a3b" stroke-width="1.200" stroke-linecap="round" stroke-linejoin="round"/></svg></div>
</div></body></html>
